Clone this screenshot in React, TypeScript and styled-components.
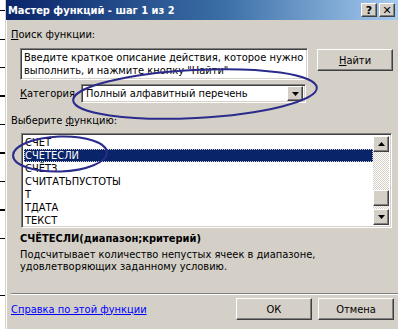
import React from "react";
import styled, { createGlobalStyle } from "styled-components";

const FONT = `"DejaVu Sans Condensed", "Liberation Sans", sans-serif`;

const GlobalStyle = createGlobalStyle`
  html, body { margin: 0; padding: 0; background: #ffffff; overflow: hidden; }
  body { font-family: ${FONT}; font-size: 11px; color: #000; }
  * { box-sizing: border-box; }
`;

const Screen = styled.div`
  position: relative;
  display: flex;
  width: 398px;
  height: 329px;
  overflow: hidden;
`;

const ExcelStrip = styled.div`
  flex: none;
  width: 5px;
  background: #ffffff
    repeating-linear-gradient(
      to bottom,
      transparent 0 10px,
      #000 10px 11px,
      transparent 11px 28.5px
    );
`;

const Dialog = styled.div`
  flex: 1;
  display: flex;
  flex-direction: column;
  background: #d4d0c8;
  border-left: 1px solid #d4d0c8;
  box-shadow: inset 1px 0 #ffffff;
`;

const TitleBar = styled.div`
  height: 20px;
  display: flex;
  align-items: center;
  padding: 0 3px 0 2px;
  background: linear-gradient(to right, #0a246a 0%, #3a6ea5 55%, #a6caf0 100%);
`;

const Title = styled.div`
  flex: 1;
  color: #ffffff;
  font-weight: bold;
  font-size: 11px;
  white-space: nowrap;
`;

const TitleButtons = styled.div`
  display: flex;
  gap: 2px;
`;

const raised = `
  border: 1px solid;
  border-color: #ffffff #404040 #404040 #ffffff;
  box-shadow: inset -1px -1px #808080, inset 1px 1px #d4d0c8;
  background: #d4d0c8;
`;

const sunken = `
  border: 1px solid;
  border-color: #808080 #ffffff #ffffff #808080;
  box-shadow: inset 1px 1px #404040, inset -1px -1px #d4d0c8;
  background: #ffffff;
`;

const CaptionButton = styled.div`
  ${raised}
  width: 16px;
  height: 14px;
  display: flex;
  align-items: center;
  justify-content: center;
  font-family: "DejaVu Sans", sans-serif;
  font-weight: bold;
  font-size: 11px;
  line-height: 1;
  color: #000;
`;

const Body = styled.div`
  display: flex;
  flex-direction: column;
`;

const Label = styled.div<{ $top: number; $left: number }>`
  margin-top: ${(p) => p.$top}px;
  margin-left: ${(p) => p.$left}px;
  line-height: 13px;
  white-space: nowrap;
`;

const Row = styled.div<{ $top: number; $left: number }>`
  display: flex;
  align-items: flex-start;
  margin-top: ${(p) => p.$top}px;
  margin-left: ${(p) => p.$left}px;
`;

const SearchBox = styled.div`
  ${sunken}
  width: 288px;
  height: 32px;
  padding: 2px 0 0 3px;
  line-height: 13px;
  white-space: nowrap;
  overflow: hidden;
`;

const PushButton = styled.div<{ $top?: number; $left?: number }>`
  ${raised}
  flex: none;
  width: 76px;
  height: 22px;
  margin-top: ${(p) => p.$top ?? 0}px;
  margin-left: ${(p) => p.$left ?? 0}px;
  display: flex;
  align-items: center;
  justify-content: center;
  white-space: nowrap;
`;

const Acc = styled.span`
  text-decoration: underline;
`;

const CategoryLabel = styled.div`
  width: 61px;
  flex: none;
  line-height: 19px;
  white-space: nowrap;
`;

const Select = styled.div`
  ${sunken}
  width: 225px;
  height: 19px;
  display: flex;
  align-items: center;
  padding: 2px 2px 2px 4px;
`;

const SelectText = styled.div`
  flex: 1;
  line-height: 15px;
  white-space: nowrap;
`;

const ArrowButton = styled.div`
  ${raised}
  width: 16px;
  height: 15px;
  display: flex;
  align-items: center;
  justify-content: center;
  flex: none;
`;

const ListBox = styled.div`
  ${sunken}
  margin-top: 6px;
  margin-left: 15px;
  width: 371px;
  height: 95px;
  display: flex;
  padding: 2px;
`;

const Items = styled.div`
  flex: 1;
  display: flex;
  flex-direction: column;
`;

const Item = styled.div<{ $selected?: boolean }>`
  height: 13px;
  line-height: 13px;
  padding-left: 1px;
  white-space: nowrap;
  background: ${(p) => (p.$selected ? "#0a246a" : "transparent")};
  color: ${(p) => (p.$selected ? "#ffffff" : "#000000")};
  outline: ${(p) => (p.$selected ? "1px dotted #d4d0c8" : "none")};
  outline-offset: -1px;
`;

const ScrollBar = styled.div`
  width: 16px;
  flex: none;
  display: flex;
  flex-direction: column;
`;

const ScrollButton = styled.div`
  ${raised}
  width: 16px;
  height: 16px;
  flex: none;
  display: flex;
  align-items: center;
  justify-content: center;
`;

const Track = styled.div`
  flex: 1;
  display: flex;
  flex-direction: column;
  background-color: #ffffff;
  background-image: repeating-conic-gradient(#d4d0c8 0 25%, #ffffff 0 50%);
  background-size: 2px 2px;
`;

const Thumb = styled.div<{ $offset: number }>`
  ${raised}
  margin-top: ${(p) => p.$offset}px;
  height: 16px;
  flex: none;
`;

const Signature = styled.div`
  margin-top: 4px;
  margin-left: 14px;
  font-weight: bold;
  line-height: 13px;
  white-space: nowrap;
`;

const Description = styled.div`
  margin-top: 4px;
  margin-left: 14px;
  line-height: 12px;
  white-space: nowrap;
`;

const Separator = styled.div`
  margin-top: 20px;
  margin-left: 5px;
  height: 2px;
  border-top: 1px solid #808080;
  border-bottom: 1px solid #ffffff;
`;

const Footer = styled.div`
  display: flex;
  align-items: center;
  margin-top: 3px;
  padding: 0 4px 0 5px;
`;

const HelpLink = styled.a`
  flex: 1;
  color: #0000ff;
  text-decoration: underline;
  white-space: nowrap;
`;

const FooterButtons = styled.div`
  display: flex;
  gap: 6px;
`;

const Annotations = styled.svg`
  position: absolute;
  left: 0;
  top: 0;
  pointer-events: none;
`;

const Triangle = ({ up }: { up?: boolean }) => (
  <svg width="7" height="4" viewBox="0 0 7 4">
    <path d={up ? "M3.5 0 L7 4 L0 4 Z" : "M0 0 L7 0 L3.5 4 Z"} fill="#000" />
  </svg>
);

const items = ["СЧЕТ", "СЧЕТЕСЛИ", "СЧЁТЗ", "СЧИТАТЬПУСТОТЫ", "Т", "ТДАТА", "ТЕКСТ"];

export default function App() {
  return (
    <>
      <GlobalStyle />
      <Screen>
        <ExcelStrip />
        <Dialog>
          <TitleBar>
            <Title>Мастер функций - шаг 1 из 2</Title>
            <TitleButtons>
              <CaptionButton>?</CaptionButton>
              <CaptionButton>✕</CaptionButton>
            </TitleButtons>
          </TitleBar>
          <Body>
            <Label $top={8} $left={5}>
              <Acc>П</Acc>оиск функции:
            </Label>
            <Row $top={7} $left={14}>
              <SearchBox>
                Введите краткое описание действия, которое нужно
                <br />
                выполнить, и нажмите кнопку "Найти"
              </SearchBox>
              <PushButton $top={1} $left={9}>
                <Acc>Н</Acc>айти
              </PushButton>
            </Row>
            <Row $top={4} $left={14}>
              <CategoryLabel>
                <Acc>К</Acc>атегория
              </CategoryLabel>
              <Select>
                <SelectText>Полный алфавитный перечень</SelectText>
                <ArrowButton>
                  <Triangle />
                </ArrowButton>
              </Select>
            </Row>
            <Label $top={11} $left={5}>
              Выберите <Acc>ф</Acc>ункцию:
            </Label>
            <ListBox>
              <Items>
                {items.map((it, i) => (
                  <Item key={it} $selected={i === 1}>
                    {it}
                  </Item>
                ))}
              </Items>
              <ScrollBar>
                <ScrollButton>
                  <Triangle up />
                </ScrollButton>
                <Track>
                  <Thumb $offset={38} />
                </Track>
                <ScrollButton>
                  <Triangle />
                </ScrollButton>
              </ScrollBar>
            </ListBox>
            <Signature>СЧЁТЕСЛИ(диапазон;критерий)</Signature>
            <Description>
              Подсчитывает количество непустых ячеек в диапазоне,
              <br />
              удовлетворяющих заданному условию.
            </Description>
            <Separator />
            <Footer>
              <HelpLink>Справка по этой функции</HelpLink>
              <FooterButtons>
                <PushButton>ОК</PushButton>
                <PushButton>Отмена</PushButton>
              </FooterButtons>
            </Footer>
          </Body>
        </Dialog>
        <Annotations width="398" height="329" viewBox="0 0 398 329">
          <ellipse
            cx="195"
            cy="94"
            rx="122"
            ry="24"
            transform="rotate(-3 195 94)"
            fill="none"
            stroke="#2b2b8c"
            strokeWidth="2"
          />
          <ellipse
            cx="60"
            cy="154"
            rx="47"
            ry="17.5"
            transform="rotate(-2 60 154)"
            fill="none"
            stroke="#2b2b8c"
            strokeWidth="2"
          />
        </Annotations>
      </Screen>
    </>
  );
}
